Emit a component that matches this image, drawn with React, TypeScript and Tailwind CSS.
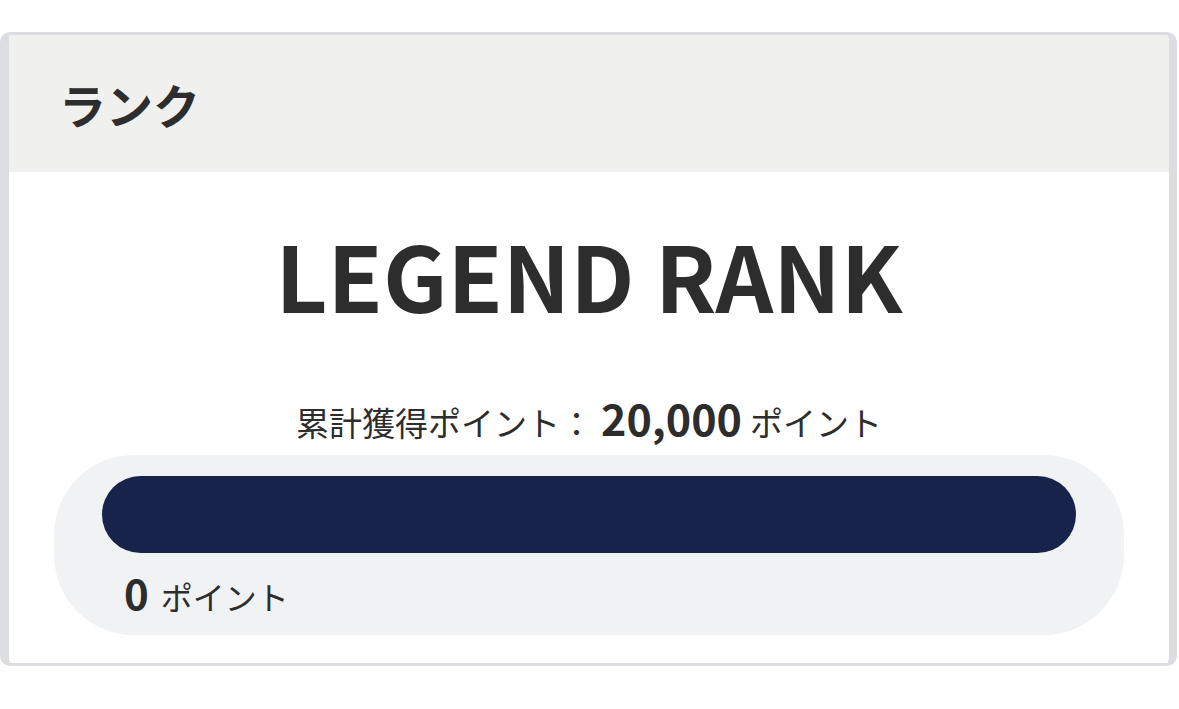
export default function App() {
  const font = { fontFamily: '"Noto Sans CJK JP", "Noto Sans", sans-serif' };
  return (
    <div className="w-[1179px] h-[709px] bg-white pt-[32px]" style={font}>
      <div className="w-[1177px] rounded-[10px] border-t-[3px] border-b-[3px] border-l-[9px] border-r-[8px] border-[#dcdde0] overflow-hidden bg-white text-[#2d2d2d]">
        <div className="h-[137px] bg-[#f0f0ef] flex items-center pl-[50px]">
          <span className="text-[47px] font-bold leading-none">ランク</span>
        </div>
        <div className="flex flex-col items-center pt-[57px] pb-[28px]">
          <div className="text-[90px] font-bold leading-none">LEGEND RANK</div>
          <div className="mt-[77px] flex items-baseline leading-none">
            <span className="text-[33px]">累計獲得ポイント：</span>
            <span className="text-[43px] font-bold ml-[8px]">20,000</span>
            <span className="text-[33px] ml-[8px]">ポイント</span>
          </div>
          <div className="self-stretch mx-[45px] mt-[16px] bg-[#f1f2f4] rounded-[80px] pt-[21px] pb-[22px] px-[48px]">
            <div className="h-[77px] rounded-full bg-[#17234a]" />
            <div className="mt-[18px] pl-[22px] flex items-baseline leading-none">
              <span className="text-[42px] font-bold">0</span>
              <span className="text-[32px] ml-[12px]">ポイント</span>
            </div>
          </div>
        </div>
      </div>
    </div>
  );
}
